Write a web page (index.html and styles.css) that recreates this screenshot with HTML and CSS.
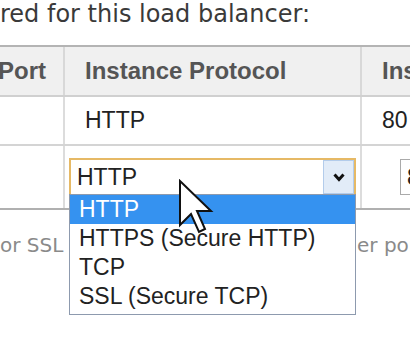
FILE: index.html
```html
<!DOCTYPE html>
<html lang="en">
<head>
    <meta charset="UTF-8">
    <meta name="viewport" content="width=device-width, initial-scale=1.0">
    <title>Listeners</title>
    <link rel="stylesheet" href="styles.css">
</head>
<body>
    <p class="intro">red for this load balancer:</p>

    <table class="grid">
        <colgroup>
            <col class="c-lb">
            <col class="c-proto">
            <col class="c-port">
        </colgroup>
        <thead>
            <tr>
                <th>Load Balancer Port</th>
                <th>Instance Protocol</th>
                <th>Instance Port</th>
            </tr>
        </thead>
        <tbody>
            <tr>
                <td>80</td>
                <td>HTTP</td>
                <td>80</td>
            </tr>
            <tr class="edit-row">
                <td></td>
                <td>
                    <div class="select">
                        <span class="select-value">HTTP</span>
                        <span class="select-btn">
                            <svg width="12" height="9" viewBox="0 0 12 9"><polyline points="1.5,1.5 6,6.5 10.5,1.5" fill="none" stroke="#111" stroke-width="3"/></svg>
                        </span>
                        <ul class="options">
                            <li class="active">HTTP</li>
                            <li>HTTPS (Secure HTTP)</li>
                            <li>TCP</li>
                            <li>SSL (Secure TCP)</li>
                        </ul>
                    </div>
                </td>
                <td><span class="field">80</span></td>
            </tr>
        </tbody>
    </table>

    <p class="note">or SSL listeners, please enter another port</p>

    <!-- mouse pointer over the open list -->
    <svg class="cursor" width="36" height="56" viewBox="0 0 36 56">
        <polygon points="2,2 2,46 13,35 21,53 27,50 19,32 33,32" fill="#fff" stroke="#111" stroke-width="2" stroke-linejoin="miter"/>
    </svg>
</body>
</html>
```

FILE: styles.css
```css
html, body {
    margin: 0;
    padding: 0;
    overflow: hidden;
    background-color: #fff;
}

body {
    position: relative;
    height: 344px;
}

.intro {
    margin: 0;
    font: 24px/28px "DejaVu Sans", Verdana, sans-serif;
    color: #3a3a3a;
    white-space: nowrap;
}

.grid {
    margin: 17px 0 0 -196px;
    border-collapse: collapse;
    table-layout: fixed;
    width: 756px;
    font-family: "Liberation Sans", Arial, sans-serif;
}

.c-lb {
    width: 259px;
}

.c-proto {
    width: 297px;
}

.c-port {
    width: 200px;
}

.grid th {
    height: 48px;
    padding: 0 20px;
    background-color: #f0f0f0;
    color: #555;
    font-size: 24px;
    font-weight: bold;
    text-align: left;
    white-space: nowrap;
    border-top: 2px solid #b4b4b4;
    border-bottom: 2px solid #d0d0d0;
    border-left: 2px solid #d8d8d8;
}

.grid td {
    height: 47px;
    padding: 0 20px;
    font-size: 23px;
    color: #222;
    white-space: nowrap;
    border-bottom: 2px solid #d4d4d4;
    border-left: 2px solid #dcdcdc;
}

.grid .edit-row td {
    height: 62px;
    padding: 0 4px 0 4px;
    border-bottom-color: #b0b0b0;
}

.select {
    position: relative;
    display: flex;
    height: 38px;
    box-sizing: border-box;
    border: 2px solid #e6b965;
    background-color: #fff;
}

.select-value {
    flex: 1;
    padding-left: 6px;
    line-height: 34px;
}

.select-btn {
    width: 29px;
    display: flex;
    align-items: center;
    justify-content: center;
    background-color: #e2ecf8;
    border: 1px solid #b3cceb;
}

.options {
    position: absolute;
    top: 100%;
    left: -2px;
    right: -2px;
    z-index: 2;
    margin: 0;
    padding: 0 0 3px;
    list-style: none;
    background-color: #fff;
    border: 1px solid #8d9aae;
}

.options li {
    padding-left: 9px;
    line-height: 29px;
    color: #222;
}

.options .active {
    background-color: #3592f0;
    color: #fff;
}

.field {
    display: inline-block;
    margin-left: 34px;
    width: 60px;
    height: 34px;
    padding: 0 6px;
    line-height: 34px;
    border: 1px solid #aaa;
}

.note {
    margin: 23px 0 0;
    font: 20px/24px "DejaVu Sans", Verdana, sans-serif;
    color: #8a8a8a;
    white-space: nowrap;
}

.cursor {
    position: absolute;
    left: 178px;
    top: 179px;
    z-index: 3;
}
```
